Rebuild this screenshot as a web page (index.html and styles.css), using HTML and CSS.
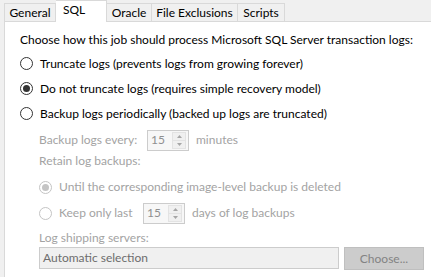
FILE: index.html
```html
<!DOCTYPE html>
<html lang="en">
<head>
    <meta charset="UTF-8">
    <meta name="viewport" content="width=device-width, initial-scale=1.0">
    <title>Job settings - SQL</title>
    <link rel="stylesheet" href="styles.css">
</head>
<body>
    <div class="tabs">
        <div class="tab tab-general">General</div>
        <div class="tab tab-sql active">SQL</div>
        <div class="tab tab-oracle">Oracle</div>
        <div class="tab tab-files">File Exclusions</div>
        <div class="tab tab-scripts">Scripts</div>
    </div>

    <div class="panel">
        <div class="intro">Choose how this job should process Microsoft SQL Server transaction logs:</div>

        <div class="option"><span class="radio"></span>Truncate logs (prevents logs from growing forever)</div>
        <div class="option"><span class="radio checked"></span>Do not truncate logs (requires simple recovery model)</div>
        <div class="option"><span class="radio"></span>Backup logs periodically (backed up logs are truncated)</div>

        <div class="sub disabled">
            <div class="every">
                <span class="every-label">Backup logs every:</span>
                <div class="spin">
                    <span class="spin-value">15</span>
                    <span class="spin-btns">
                        <span class="spin-btn"><svg width="5" height="3" viewBox="0 0 5 3"><path d="M0 3 L2.5 0 L5 3 Z" fill="#a6a6a6"/></svg></span>
                        <span class="spin-btn"><svg width="5" height="3" viewBox="0 0 5 3"><path d="M0 0 L2.5 3 L5 0 Z" fill="#a6a6a6"/></svg></span>
                    </span>
                </div>
                <span class="unit">minutes</span>
            </div>

            <div class="caption retain">Retain log backups:</div>

            <div class="sub-option until"><span class="radio checked"></span>Until the corresponding image-level backup is deleted</div>
            <div class="sub-option">
                <span class="radio"></span>
                <span class="keep-label">Keep only last</span>
                <div class="spin">
                    <span class="spin-value">15</span>
                    <span class="spin-btns">
                        <span class="spin-btn"><svg width="5" height="3" viewBox="0 0 5 3"><path d="M0 3 L2.5 0 L5 3 Z" fill="#a6a6a6"/></svg></span>
                        <span class="spin-btn"><svg width="5" height="3" viewBox="0 0 5 3"><path d="M0 0 L2.5 3 L5 0 Z" fill="#a6a6a6"/></svg></span>
                    </span>
                </div>
                <span class="unit">days of log backups</span>
            </div>

            <div class="caption shipping">Log shipping servers:</div>
            <div class="servers">
                <div class="servers-box">Automatic selection</div>
                <button class="choose" disabled>Choose...</button>
            </div>
        </div>
    </div>
</body>
</html>
```

FILE: styles.css
```css
body {
    margin: 0;
    background-color: #f0f0f0;
    font-family: Lato, "Noto Sans", sans-serif;
    font-size: 12px;
    line-height: 16px;
    color: #000;
    overflow: hidden;
}

/* tab strip */
.tabs {
    display: flex;
    align-items: flex-end;
    height: 21px;
    padding-left: 4px;
}

.tab {
    box-sizing: border-box;
    height: 18px;
    line-height: 17px;
    text-align: center;
    background: #f0f0f0;
    border: 1px solid #d9d9d9;
    border-bottom: none;
    border-left: none;
    white-space: nowrap;
}

.tab-general {
    width: 52px;
    border-left: 1px solid #d9d9d9;
}

.tab-sql { width: 51px; }
.tab-oracle { width: 45px; }
.tab-files { width: 86px; }
.tab-scripts { width: 47px; }

.tab.active {
    position: relative;
    height: 22px;
    margin-bottom: -1px;
    line-height: 18px;
    background: #fff;
    text-align: left;
    padding-left: 7px;
}

/* page body */
.panel {
    box-sizing: border-box;
    margin-left: 4px;
    height: 256px;
    padding: 10px 0 0 15px;
    background: #fff;
    border-top: 1px solid #d9d9d9;
    border-left: 1px solid #d9d9d9;
}

.intro {
    height: 16px;
    margin-bottom: 3px;
}

.option,
.sub-option {
    display: flex;
    align-items: center;
    height: 25px;
    white-space: nowrap;
}

.sub-option {
    height: 26px;
}

.radio {
    box-sizing: border-box;
    width: 13px;
    height: 13px;
    margin-right: 7px;
    border: 1px solid #333;
    border-radius: 50%;
    background: #fff;
    display: flex;
    align-items: center;
    justify-content: center;
    flex-shrink: 0;
}

.radio.checked::after {
    content: "";
    width: 7px;
    height: 7px;
    border-radius: 50%;
    background: #333;
}

/* disabled block */
.sub {
    margin-left: 19px;
}

.disabled {
    color: #a3a3a3;
}

.disabled .radio {
    border-color: #c4c4c4;
}

.disabled .radio.checked::after {
    background: #c4c4c4;
}

.every {
    display: flex;
    align-items: center;
    height: 24px;
    margin-top: 2px;
}

.every-label {
    width: 108px;
}

.keep-label {
    width: 84px;
}

.spin {
    box-sizing: border-box;
    display: flex;
    width: 42px;
    height: 21px;
    border: 1px solid #cccccc;
    background: #f7f7f7;
    margin-right: 7px;
}

.spin-value {
    flex: 1;
    padding-left: 3px;
    line-height: 18px;
    color: #8f8f8f;
}

.spin-btns {
    display: flex;
    flex-direction: column;
    width: 12px;
    margin: 1px 2px 1px 0;
    background: #f0f0f0;
    border: 1px solid #e3e3e3;
}

.spin-btn {
    flex: 1;
    display: flex;
    align-items: center;
    justify-content: center;
}

.spin-btn + .spin-btn {
    border-top: 1px solid #e3e3e3;
}

.caption {
    height: 16px;
}

.retain {
    margin-top: 1px;
}

.until {
    margin-top: 5px;
}

.shipping {
    margin-top: 4px;
}

.servers {
    display: flex;
    align-items: flex-start;
    margin-top: 1px;
}

.servers-box {
    box-sizing: border-box;
    width: 300px;
    height: 22px;
    padding-left: 3px;
    line-height: 20px;
    background: #f0f0f0;
    border: 1px solid #cccccc;
    color: #6d6d6d;
}

.choose {
    box-sizing: border-box;
    width: 80px;
    height: 23px;
    margin-left: 5px;
    padding: 0;
    font: inherit;
    background: #cccccc;
    border: 1px solid #bfbfbf;
    color: #838383;
}
```
